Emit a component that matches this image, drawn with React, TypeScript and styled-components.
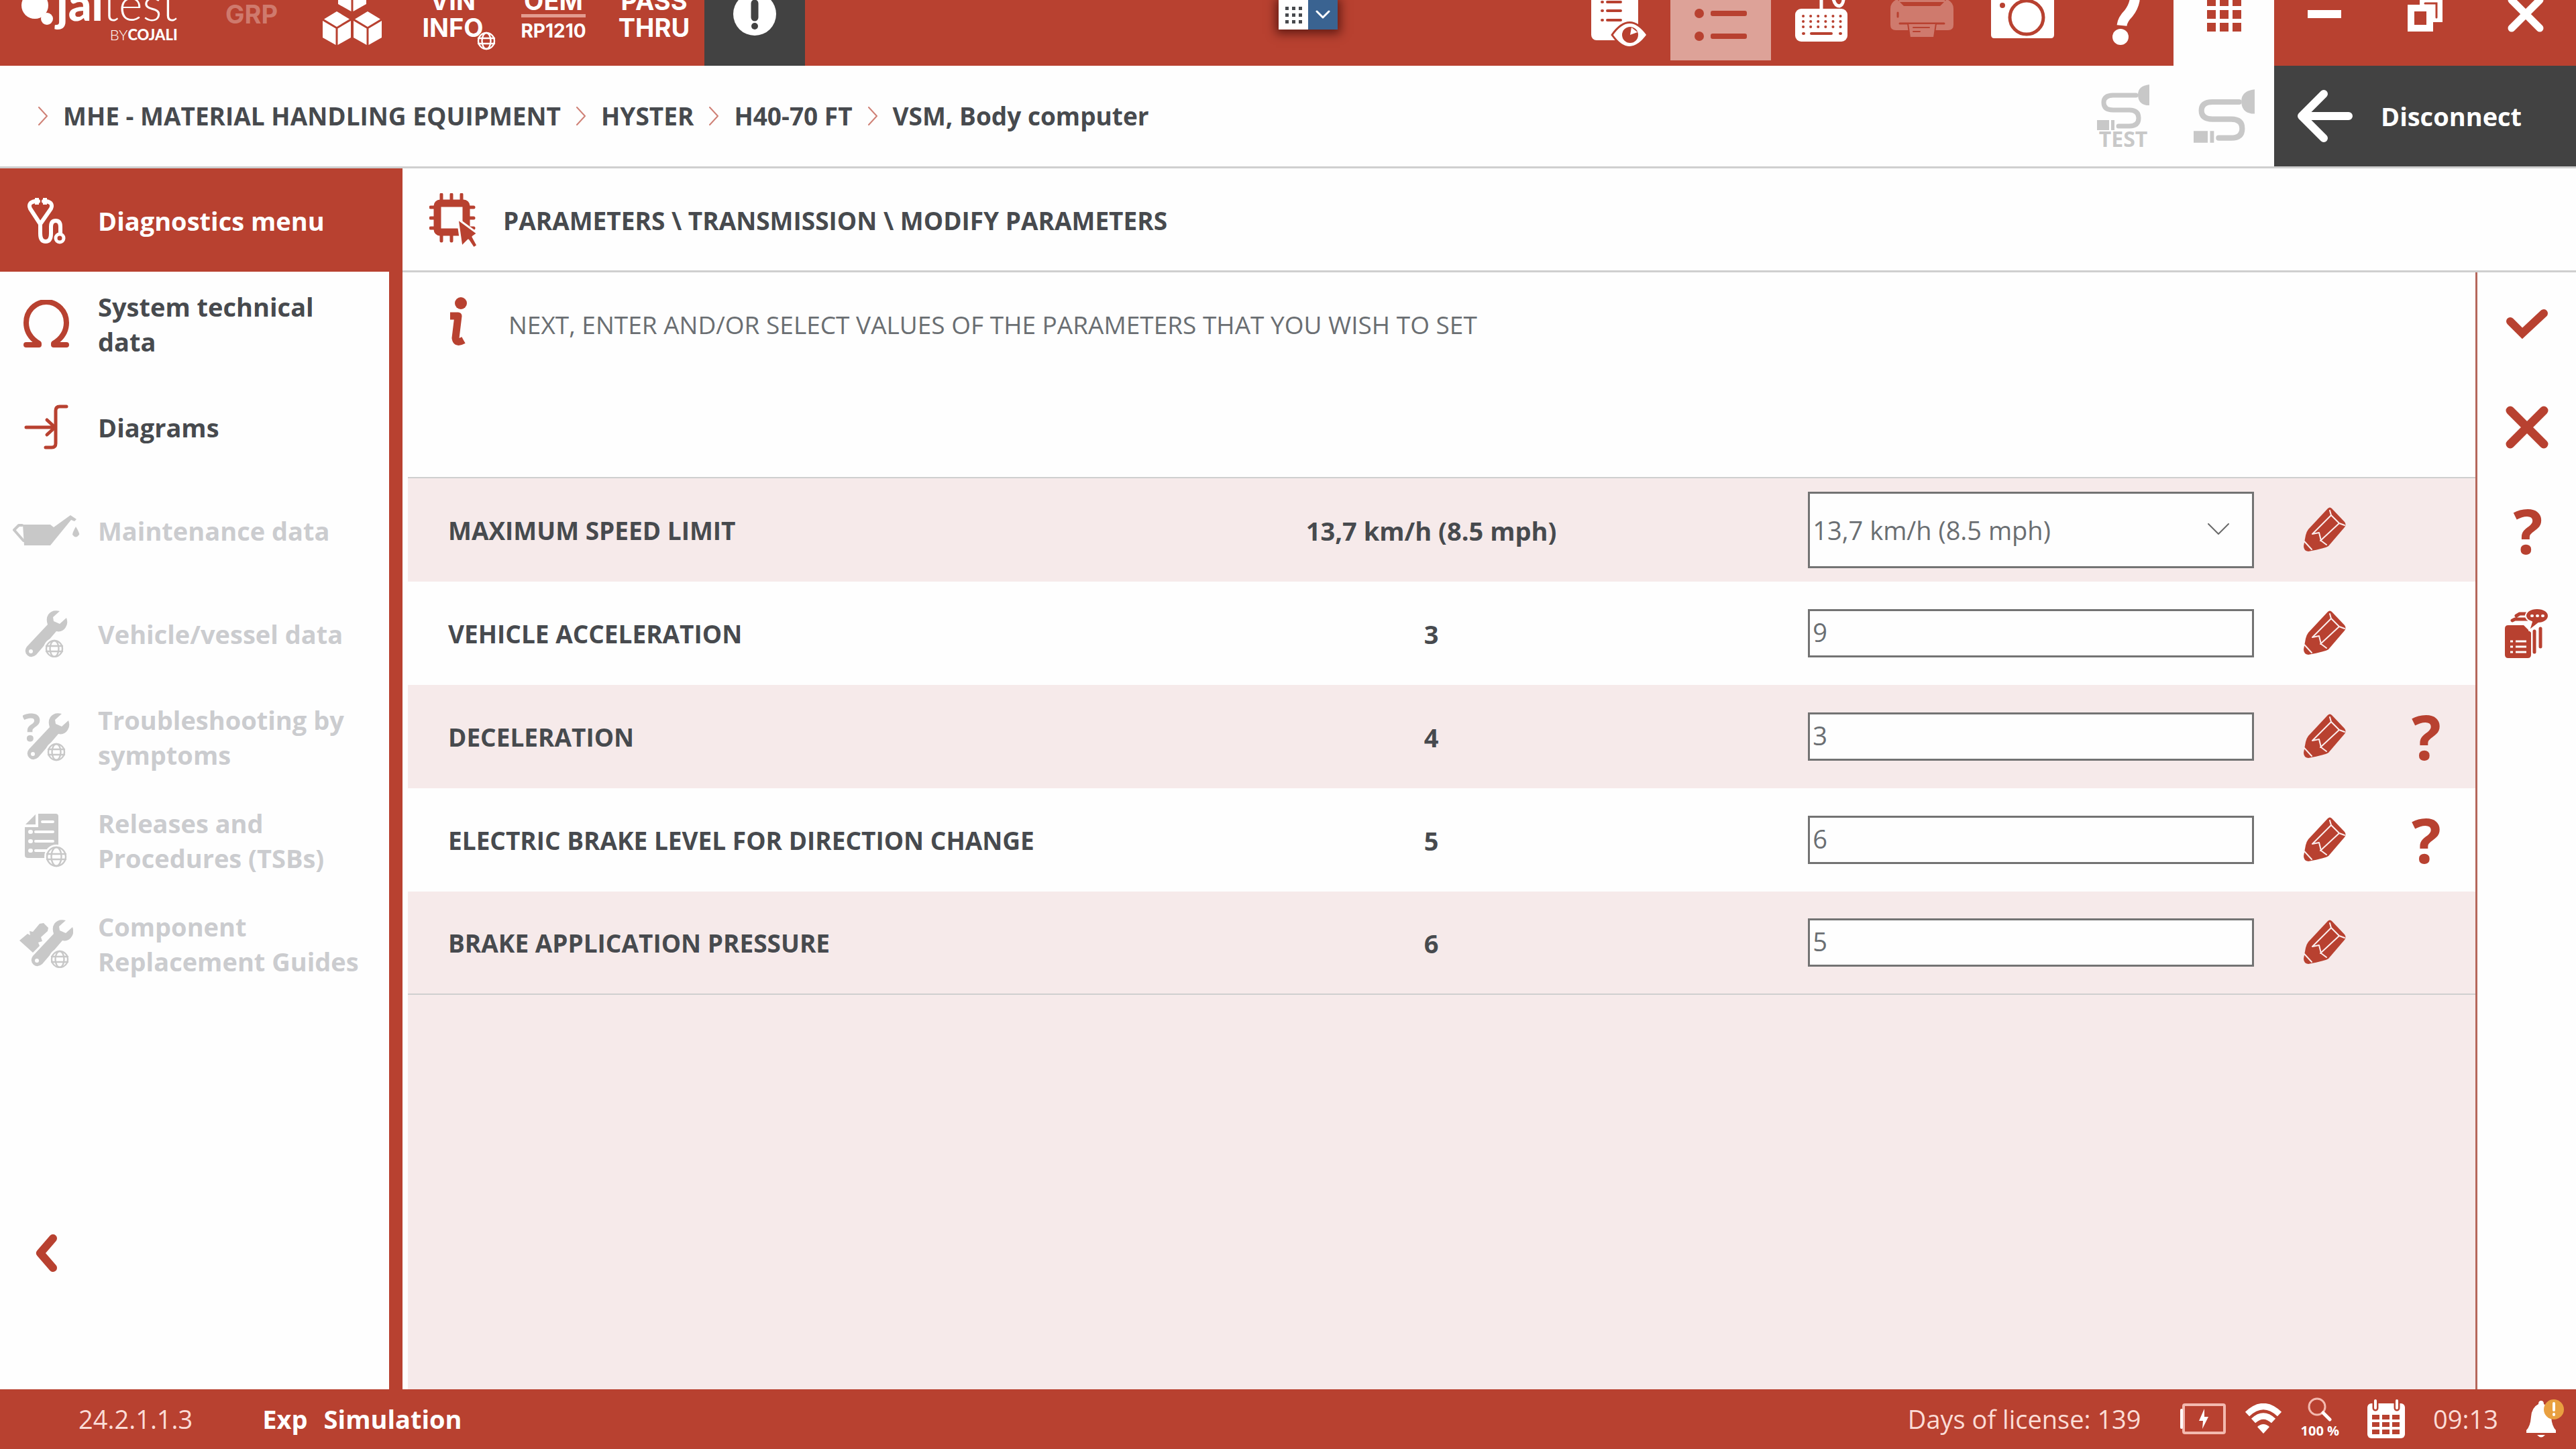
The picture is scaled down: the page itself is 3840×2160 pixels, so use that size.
import React from "react";
import styled, { createGlobalStyle, css } from "styled-components";

const color = {
  red: "#b84130",
  dark: "#424242",
  text: "#474a4e",
  soft: "#6a6e72",
  off: "#c8c8c8",
  line: "#cfcfcf",
  pink: "#f6eaea",
};

const GlobalStyle = createGlobalStyle`
  *, *::before, *::after { box-sizing: border-box; }
  body { margin: 0; background: #fefefe; }
  body, button, input, select {
    font-family: "Open Sans", "Noto Sans", sans-serif;
    font-size: 37px;
    line-height: 52px;
    color: ${color.text};
  }
  button { padding: 0; border: 0; background: none; cursor: pointer; }
  svg { display: block; flex: none; }
`;

/* ---------- layout ---------- */

const Page = styled.div`
  position: relative;
  display: flex;
  flex-direction: column;
  min-height: 100vh;
`;

const TopBar = styled.header`
  display: flex;
  align-items: flex-end;
  justify-content: space-between;
  height: 98px;
  overflow: hidden;
  background: ${color.red};
`;

const TileGroup = styled.div`
  display: flex;
`;

const Tile = styled.button<{ $tone?: "dark" | "light" | "active"; $faded?: boolean }>`
  display: flex;
  flex-direction: column;
  align-items: center;
  justify-content: center;
  width: 150px;
  height: 154px;
  color: ${(p) => (p.$faded ? "#cf7a6d" : "#fff")};
  ${(p) => p.$tone === "dark" && css`background: ${color.dark};`}
  ${(p) => p.$tone === "light" && css`background: #fefefe; color: ${color.red};`}
  ${(p) =>
    p.$tone === "active" &&
    css`
      background: #dda298;
      border-bottom: 8px solid ${color.red};
      color: ${color.red};
    `}
`;

const Caption = styled.span<{ $small?: boolean }>`
  font-family: Inter, "Open Sans", sans-serif;
  font-weight: 700;
  font-size: ${(p) => (p.$small ? 28 : 38)}px;
  line-height: ${(p) => (p.$small ? 32 : 40)}px;
`;

const CaptionRule = styled.span`
  width: 96px;
  height: 5px;
  margin-bottom: 4px;
  background: #e39c8f;
`;

const WithGlobe = styled.span`
  position: relative;
  display: flex;
  flex-direction: column;
  align-items: center;
`;

const GlobeBadge = styled.span`
  position: absolute;
  right: -18px;
  bottom: -14px;
  border-radius: 50%;
  background: ${color.red};
`;

const Brand = styled.div`
  display: flex;
  align-items: flex-end;
  width: 300px;
  height: 154px;
  padding: 0 0 34px 32px;
  color: #fff;
`;

const BrandText = styled.div`
  display: flex;
  flex-direction: column;
  align-items: flex-end;
  font-family: Lato, sans-serif;
`;

const BrandName = styled.span`
  margin-bottom: 9px;
  font-size: 68px;
  line-height: 52px;
  font-weight: 300;
  b { font-weight: 900; }
`;

const BrandBy = styled.span`
  font-size: 22px;
  line-height: 24px;
  font-weight: 300;
  b { font-weight: 900; }
`;

const Launcher = styled.div`
  position: absolute;
  top: 0;
  left: 50%;
  display: flex;
  width: 88px;
  height: 44px;
  margin-left: -14px;
  box-shadow: 0 2px 14px 4px rgba(40, 0, 0, 0.6);
`;

const LauncherButton = styled.button<{ $blue?: boolean }>`
  display: flex;
  align-items: center;
  justify-content: center;
  width: 44px;
  height: 44px;
  background: ${(p) => (p.$blue ? "#3a6391" : "#fff")};
`;

const PathBar = styled.div`
  display: flex;
  align-items: stretch;
  justify-content: space-between;
  height: 153px;
  border-bottom: 3px solid ${color.line};
`;

const Crumbs = styled.nav`
  display: flex;
  align-items: center;
  gap: 22px;
  padding-left: 56px;
  a {
    font-weight: 700;
    color: ${color.text};
    text-decoration: none;
  }
`;

const PathActions = styled.div`
  display: flex;
`;

const CableButton = styled.button`
  display: flex;
  flex-direction: column;
  align-items: center;
  justify-content: center;
  width: 150px;
  color: ${color.off};
`;

const CableText = styled.span`
  font-size: 32px;
  line-height: 26px;
  font-weight: 700;
`;

const Disconnect = styled.button`
  display: flex;
  align-items: center;
  gap: 41px;
  width: 450px;
  padding-left: 34px;
  background: ${color.dark};
  color: #fff;
  font-size: 38px;
  font-weight: 700;
`;

const Body = styled.div`
  flex: 1;
  display: flex;
  align-items: stretch;
`;

const Sidebar = styled.aside`
  display: flex;
  flex-direction: column;
  width: 600px;
  flex: none;
  border-right: 20px solid ${color.red};
`;

const MenuItem = styled.button<{ $active?: boolean }>`
  display: flex;
  align-items: center;
  width: 100%;
  height: 154px;
  padding: 2px 36px 0 0;
  text-align: left;
  font-size: 38px;
  font-weight: 700;
  background: ${(p) => (p.$active ? color.red : "transparent")};
  box-shadow: ${(p) => (p.$active ? `20px 0 0 ${color.red}` : "none")};
  color: ${(p) => (p.$active ? "#fff" : color.text)};
  &:disabled { color: #cbcccf; }
`;

const MenuIcon = styled.span<{ $tint: string }>`
  display: flex;
  justify-content: center;
  flex: none;
  width: 138px;
  margin-right: 8px;
  color: ${(p) => p.$tint};
`;

const Collapse = styled.button`
  width: 138px;
  height: 154px;
  margin-top: auto;
  margin-bottom: 126px;
  display: flex;
  align-items: center;
  justify-content: center;
  color: ${color.red};
`;

const Main = styled.main`
  flex: 1;
  min-width: 0;
  display: flex;
  flex-direction: column;
`;

const Title = styled.h1`
  display: flex;
  align-items: center;
  gap: 38px;
  height: 155px;
  margin: 0;
  padding: 4px 0 0 40px;
  border-bottom: 3px solid ${color.line};
  font-size: 37px;
  font-weight: 700;
  color: ${color.text};
`;

const Work = styled.div`
  flex: 1;
  display: flex;
`;

const Panel = styled.section`
  flex: 1;
  min-width: 0;
  display: flex;
  flex-direction: column;
  padding-left: 8px;
`;

const Info = styled.p`
  display: flex;
  align-items: flex-start;
  gap: 60px;
  height: 305px;
  margin: 0;
  padding: 36px 0 0 60px;
  color: ${color.soft};
  span { padding-top: 16px; }
`;

const Filler = styled.div`
  flex: 1;
  background: ${color.pink};
`;

const Params = styled.table`
  width: 100%;
  table-layout: fixed;
  border-spacing: 0;
  border-top: 2px solid ${color.line};
`;

const Row = styled.tr`
  height: 154px;
  &:nth-child(odd) { background: ${color.pink}; }
  &:last-child > * { border-bottom: 2px solid ${color.line}; }
`;

const NameCell = styled.th`
  padding: 2px 0 0 60px;
  text-align: left;
  font-weight: 700;
`;

const ValueCell = styled.td`
  padding: 2px 0 0;
  text-align: center;
  font-size: 38px;
  font-weight: 700;
`;

const FieldCell = styled.td`
  padding: 0 30px 0 84px;
`;

const IconCell = styled.td`
  padding: 0;
  color: ${color.red};
`;

const field = css`
  display: block;
  width: 100%;
  border: 3px solid #737373;
  border-radius: 0;
  background: #fefefe;
  color: ${color.soft};
  font-size: 38px;
  outline: none;
`;

const TextField = styled.input`
  ${field}
  height: 72px;
  padding: 0 4px 4px;
`;

const SelectBox = styled.div`
  position: relative;
  svg {
    position: absolute;
    right: 36px;
    top: 46px;
    pointer-events: none;
  }
`;

const SelectField = styled.select`
  ${field}
  height: 114px;
  padding: 0 4px;
  appearance: none;
`;

const IconButton = styled.button`
  display: flex;
  align-items: center;
  justify-content: center;
  width: 100%;
  height: 152px;
  color: ${color.red};
`;

const Question = styled.span`
  padding-left: 4px;
  font-size: 92px;
  line-height: 92px;
  font-weight: 700;
`;

const Rail = styled.div`
  width: 150px;
  flex: none;
  border-left: 3px solid #b5675b;
  button { height: 154px; }
`;

const Footer = styled.footer`
  display: flex;
  align-items: center;
  justify-content: space-between;
  height: 89px;
  padding: 0 18px 2px 117px;
  background: ${color.red};
  color: #fbdcd6;
  font-size: 38px;
`;

const FooterGroup = styled.div<{ $gap: number }>`
  display: flex;
  align-items: center;
  gap: ${(p) => p.$gap}px;
`;

const Strong = styled.span`
  font-weight: 700;
  color: #fff;
`;

const License = styled.span`
  margin-right: 16px;
`;

const Version = styled.span`
  margin-right: 80px;
`;

const Zoom = styled.button`
  display: flex;
  flex-direction: column;
  align-items: center;
  color: #fff;
  font-size: 20px;
  line-height: 28px;
  font-weight: 700;
`;

/* ---------- icons ---------- */

type Box = { w: number; h: number; children: React.ReactNode; scale?: number };
const Svg = ({ w, h, children, scale = 1 }: Box) => (
  <svg
    width={Math.round(w * scale)}
    height={Math.round(h * scale)}
    viewBox={`0 0 ${w} ${h}`}
    fill="none"
    stroke="none"
    strokeLinecap="round"
    strokeLinejoin="round"
    aria-hidden="true"
  >
    {children}
  </svg>
);

const GlobeShape = ({ x, y, r = 13, bg }: { x: number; y: number; r?: number; bg?: string }) => (
  <g stroke="currentColor" strokeWidth="2.4">
    {bg && <circle cx={x} cy={y} r={r + 3} fill={bg} stroke="none" />}
    <circle cx={x} cy={y} r={r - 1} />
    <ellipse cx={x} cy={y} rx={r / 2} ry={r - 1} />
    <path d={`M${x - r + 1} ${y - 4}H${x + r - 1}M${x - r + 1} ${y + 4}H${x + r - 1}`} />
  </g>
);

const BrandMark = () => (
  <Svg w={52} h={92}>
    <circle cx="20" cy="36" r="20" fill="currentColor" />
    <circle cx="38" cy="56" r="9" fill="currentColor" />
  </Svg>
);

const Cube = ({ x, y }: { x: number; y: number }) => (
  <path
    fill="currentColor"
    d={`M${x} ${y}l19 11.500l-19 11.500l-19 -11.500z M${x - 21} ${y + 14}l19.500 11.500v24.500l-19.500 -11z M${x + 21} ${y + 14}l-19.500 11.500v24.500l19.500 -11z`}
  />
);
const Cubes = () => (
  <Svg w={92} h={108}>
    <Cube x={46} y={0} />
    <Cube x={23} y={50} />
    <Cube x={69} y={50} />
  </Svg>
);

const AlertIcon = () => (
  <Svg w={64} h={64}>
    <circle cx="32" cy="32" r="32" fill="#fff" />
    <path d="M32 16V37" stroke={color.dark} strokeWidth="11" />
    <circle cx="32" cy="50" r="5" fill={color.dark} />
  </Svg>
);

const ReportEye = () => (
  <Svg w={86} h={100}>
    <rect width="70" height="89" rx="8" fill="#fff" />
    <path d="M24 19H44M24 32H44M24 45H44M24 59H44" stroke={color.red} strokeWidth="4" />
    <path d="M16 19h1M16 32h1M16 45h1M16 59h1" stroke={color.red} strokeWidth="4" />
    <path d="M31 81Q57 44 84 81Q57 118 31 81Z" fill="#fff" stroke={color.red} strokeWidth="3" />
    <circle cx="58" cy="81" r="12" fill={color.red} />
    <path d="M58 81L60 70L69 77Z" fill="#fff" />
  </Svg>
);

const ListIcon = () => (
  <Svg w={78} h={96}>
    {[17, 51, 85].map((y) => (
      <g key={y} fill="currentColor">
        <circle cx="7" cy={y} r="7" />
        <rect x="24" y={y - 4} width="54" height="8" rx="3" />
      </g>
    ))}
  </Svg>
);

const KeyboardIcon = () => (
  <Svg w={78} h={84}>
    <path d="M39 34V2M39 2Q52 -4 56 14Q58 30 66 30Q74 28 72 8" stroke="#fff" strokeWidth="5" />
    <rect y="34" width="78" height="49" rx="9" fill="#fff" />
    {[45, 53, 61].map((y) => (
      <path key={y} d={`M12 ${y}H68`} stroke={color.red} strokeWidth="4" strokeDasharray="0.100 11" />
    ))}
    <path d="M12 71h1M24 71H54M67 71h1" stroke={color.red} strokeWidth="4" />
  </Svg>
);

const PrinterIcon = () => (
  <Svg w={94} h={72}>
    <path d="M18 0H76L82 18H12Z" fill="currentColor" />
    <path d="M10 14L20 24H74L84 14Q94 18 94 28V52Q94 60 86 60H8Q0 60 0 52V28Q0 18 10 14Z" fill="currentColor" />
    <path d="M11 34v6M14 50H80" stroke={color.red} strokeWidth="3" />
    <path d="M26 50H68L65 71H29Z" fill="currentColor" stroke={color.red} strokeWidth="2" />
    <path d="M34 56H58M34 62H44" stroke={color.red} strokeWidth="2" />
  </Svg>
);

const CameraIcon = () => (
  <Svg w={94} h={72}>
    <path d="M5 8H28L34 0H72L78 8H89Q94 8 94 13V67Q94 72 89 72H5Q0 72 0 67V13Q0 8 5 8Z" fill="#fff" />
    <circle cx="53" cy="41" r="25" stroke={color.red} strokeWidth="5" />
    <circle cx="17" cy="23" r="4" fill={color.red} />
  </Svg>
);

const HelpIcon = () => (
  <Svg w={50} h={92}>
    <path d="M8 18Q16 8 27 8Q44 10 42 26Q40 36 33 45Q24 54 23 63" stroke="#fff" strokeWidth="15" strokeLinecap="butt" />
    <circle cx="21" cy="80" r="12" fill="#fff" />
  </Svg>
);

const GridIcon = ({ size, dot }: { size: number; dot: number }) => (
  <Svg w={size} h={size}>
    {[0, 1, 2].flatMap((r) =>
      [0, 1, 2].map((c) => (
        <rect
          key={`${r}${c}`}
          x={(c * (size - dot)) / 2}
          y={(r * (size - dot)) / 2}
          width={dot}
          height={dot}
          fill="currentColor"
        />
      ))
    )}
  </Svg>
);

const MinusIcon = () => (
  <Svg w={50} h={12}>
    <rect width="50" height="12" fill="#fff" />
  </Svg>
);

const RestoreIcon = () => (
  <Svg w={52} h={52}>
    <path d="M18 0H52V38H34V12H18Z" fill="#fff" />
    <path d="M26 10H43V31" stroke={color.red} strokeWidth="3" strokeLinejoin="miter" />
    <rect x="5" y="17" width="28" height="30" fill={color.red} stroke="#fff" strokeWidth="10" strokeLinejoin="miter" />
  </Svg>
);

const CloseIcon = () => (
  <Svg w={56} h={56}>
    <path d="M7 7L49 49M49 7L7 49" stroke="#fff" strokeWidth="11" />
  </Svg>
);

const ChevronDown = () => (
  <Svg w={22} h={14}>
    <path d="M2 2L11 11L20 2" stroke="#fff" strokeWidth="3" />
  </Svg>
);

const CrumbArrow = () => (
  <Svg w={16} h={28}>
    <path d="M2 1L14 14L2 27" stroke="#cf8176" strokeWidth="2" />
  </Svg>
);

const Cable = ({ scale }: { scale?: number }) => (
  <Svg w={78} h={68} scale={scale}>
    <path d="M58 16H24Q10 16 10 27Q10 38 24 38H48Q62 38 62 50Q62 62 48 62H32" stroke="currentColor" strokeWidth="7" />
    <path d="M78 0V31H74Q61 29 61 15Q61 2 78 0Z" fill="currentColor" />
    <path d="M0 53H18V68H0ZM21 53H26V68H21Z" fill="currentColor" />
  </Svg>
);

const ArrowLeft = () => (
  <Svg w={84} h={78}>
    <path d="M40 6L7 39L40 72M10 39H77" stroke="#fff" strokeWidth="12" />
  </Svg>
);

const Stethoscope = () => (
  <Svg w={58} h={70}>
    <path
      d="M17 6H12Q1 8 5 17L20 40L36 17Q40 8 29 6H25M20 40V54Q20 66 28 66Q36 66 36 54V44Q36 35 43 35Q50 35 50 44V54"
      stroke="currentColor"
      strokeWidth="6"
    />
    <path d="M12 6H18M24 6H30" stroke="currentColor" strokeWidth="10" strokeLinecap="butt" />
    <circle cx="49" cy="61" r="6" stroke="currentColor" strokeWidth="5" />
  </Svg>
);

const Omega = () => (
  <Svg w={68} h={72}>
    <path
      d="M4 67H23V65C10 57 4 46 4 34A30 31 0 0 1 64 34C64 46 58 57 45 65V67H64"
      stroke="currentColor"
      strokeWidth="8"
    />
  </Svg>
);

const DiagramIcon = () => (
  <Svg w={66} h={68}>
    <path d="M63 3H53Q47 3 47 9V58Q47 64 41 64H32" stroke="currentColor" strokeWidth="5" />
    <path d="M3 34H46M34 23L46 34L34 45" stroke="currentColor" strokeWidth="5" />
  </Svg>
);

const OilCan = () => (
  <Svg w={100} h={46}>
    <path d="M15 14H56L61 18L86 0L95 6L92 9L87 7L56 45H17Z" fill="currentColor" />
    <path d="M14 15L9 15L2 22L16 38" stroke="currentColor" strokeWidth="4" />
    <path d="M94 17Q100 27 99 29Q94 36 89 29Q89 26 94 17Z" fill="currentColor" />
  </Svg>
);

/* Spanner with open jaws at the top right and a pierced handle. */
const Spanner = ({ x }: { x: number }) => (
  <g transform={`translate(${x} 0)`}>
    <path
      d="M52 1Q41 -2 35 6Q31 12 34 21L3 54Q-2 61 4 67Q10 72 17 66L47 31Q56 33 61 25Q65 19 62 11L52 20L43 16L42 10Z"
      fill="currentColor"
    />
    <circle cx="9" cy="61" r="3" fill="#fefefe" />
  </g>
);

const VehicleIcon = () => (
  <Svg w={64} h={70}>
    <Spanner x={0} />
    <GlobeShape x={44} y={57} bg="#fefefe" />
  </Svg>
);

const TroubleIcon = () => (
  <Svg w={70} h={72}>
    <text x="-1" y="42" fontFamily="Open Sans" fontWeight="700" fontSize="58" fill="currentColor">?</text>
    <Spanner x={6} />
    <GlobeShape x={50} y={58} bg="#fefefe" />
  </Svg>
);

const ReleaseIcon = () => (
  <Svg w={64} h={80}>
    <path d="M20 0H46Q50 0 50 4V66H5Q0 66 0 62V20H20Z" fill="currentColor" />
    <path d="M1 16L16 1V16Z" fill="currentColor" />
    <path d="M26 12H42M16 27H42M16 41H42M16 55H36" stroke="#fefefe" strokeWidth="4" />
    <path d="M8 27h1M8 41h1M8 55h1" stroke="#fefefe" strokeWidth="6" />
    <GlobeShape x={47} y={64} r={15} bg="#fefefe" />
  </Svg>
);

const ComponentIcon = () => (
  <Svg w={80} h={72}>
    <path d="M30 6L36 5L43 12L42 17L32 26L34 32L28 34L30 39L20 49L0 31L12 21L16 23L15 17L20 18Z" fill="currentColor" />
    <Spanner x={17} />
    <GlobeShape x={60} y={59} bg="#fefefe" />
  </Svg>
);

const ChevronLeft = () => (
  <Svg w={34} h={58}>
    <path d="M27 7L8 29L27 51" stroke="currentColor" strokeWidth="12" />
  </Svg>
);

const ChipIcon = () => (
  <Svg w={72} h={82}>
    <rect x="12" y="15" width="43" height="43" rx="4" stroke={color.red} strokeWidth="11" />
    <path
      d="M18 2V10M33 2V10M48 2V10M18 63V71M33 63V71M2 21H8M2 37H8M2 52H8M60 21H66M60 37H66M60 52H66"
      stroke={color.red}
      strokeWidth="5"
    />
    <path d="M42 38L72 60L65 65L72 78L66 82L58 70L48 80Z" fill={color.red} stroke="#fefefe" strokeWidth="3" />
  </Svg>
);

const InfoIcon = () => (
  <Svg w={30} h={76}>
    <circle cx="19" cy="10" r="9" fill={color.red} />
    <path d="M3 29H15L11 62Q12 71 23 65" stroke={color.red} strokeWidth="11" strokeLinecap="butt" />
  </Svg>
);

const Pencil = () => (
  <Svg w={64} h={68}>
    <path d="M37 2Q40 -1 43 2L62 22Q65 26 62 30L38 58Q34 61 8 66Q1 65 1 58L4 42Q5 37 8 33Z" fill="currentColor" />
    <path
      d="M14 40L42 12M26 50L54 24M14 40L24 38L27 50L35 56M40 5L42 12L54 24L62 27M2 51L13 63"
      stroke="#fbeeee"
      strokeWidth="2"
    />
  </Svg>
);

const SelectArrow = () => (
  <Svg w={34} h={20}>
    <path d="M2 2L17 17L32 2" stroke="#6a6a6a" strokeWidth="2" />
  </Svg>
);

const CheckIcon = () => (
  <Svg w={64} h={48}>
    <path d="M7 20L25 38L57 8" stroke="currentColor" strokeWidth="12" strokeLinejoin="miter" />
  </Svg>
);

const CrossIcon = () => (
  <Svg w={64} h={66}>
    <path d="M7 8L57 58M57 8L7 58" stroke="currentColor" strokeWidth="13" />
  </Svg>
);

const NotesIcon = () => (
  <Svg w={66} h={76}>
    <path d="M17 11L22 8H32M11 18L15 16H34M44 34V65M53 30V57" stroke="currentColor" strokeWidth="5" />
    <path d="M5 25H28L39 36V69Q39 74 34 74H5Q0 74 0 69V30Q0 25 5 25Z" fill="currentColor" />
    <path d="M16 49H32M16 57H32M16 65H32M8 49h4M8 57h4M8 65h4" stroke="#fefefe" strokeWidth="3" strokeLinecap="butt" />
    <path d="M48 0C58 0 65 5 65 11C65 17 58 22 50 22L36 33L40 20C34 18 31 15 31 11C31 5 38 0 48 0Z" fill="currentColor" stroke="#fefefe" strokeWidth="2" />
    <path d="M40 11h1M48 11h1M56 11h1" stroke="#fefefe" strokeWidth="4" />
  </Svg>
);

const Battery = () => (
  <Svg w={68} h={46}>
    <rect x="5" y="2" width="61" height="42" rx="2" stroke="#f3b9af" strokeWidth="4" />
    <path d="M2 10V36" stroke="#fff" strokeWidth="4" />
    <path d="M36 8L28 26H34L33 38L42 20H36Z" fill="#fff" />
  </Svg>
);

const Wifi = () => (
  <Svg w={56} h={46}>
    <path d="M4 16Q28 -7 52 16M13 26Q28 12 43 26" stroke="#fff" strokeWidth="9" strokeLinecap="butt" />
    <path d="M28 45L19 35Q28 27 37 35Z" fill="#fff" />
  </Svg>
);

const Magnifier = () => (
  <Svg w={36} h={36}>
    <circle cx="14" cy="14" r="12" stroke="#f3b9af" strokeWidth="3" />
    <path d="M23 23L33 33" stroke="#fff" strokeWidth="5" />
  </Svg>
);

const CalendarIcon = () => (
  <Svg w={56} h={60}>
    <rect y="7" width="56" height="52" rx="6" fill="#fff" />
    <path d="M12 2V14M44 2V14" stroke={color.red} strokeWidth="9" />
    <path d="M12 3V14M44 3V14" stroke="#fff" strokeWidth="4" />
    <path
      d="M7 24h11v7h-11zM22 24h11v7h-11zM37 24h11v7h-11zM7 35h11v7h-11zM22 35h11v7h-11zM37 35h11v7h-11zM7 46h11v7h-11zM22 46h11v7h-11zM37 46h11v7h-11z"
      fill={color.red}
    />
  </Svg>
);

const BellIcon = () => (
  <Svg w={56} h={58}>
    <path d="M22 2Q26 2 26 7Q36 12 37 26Q38 40 44 46V50H0V46Q6 40 7 26Q8 12 18 7Q18 2 22 2Z" fill="#fff" />
    <path d="M16 53Q22 60 28 53Z" fill="#fff" />
    <circle cx="41" cy="15" r="15" fill="#e9a040" />
    <path d="M41 6V16M41 22V23" stroke="#fff" strokeWidth="4" />
  </Svg>
);

/* ---------- data ---------- */

const menu = [
  { text: "Diagnostics menu", icon: <Stethoscope />, state: "active" },
  { text: "System technical data", icon: <Omega />, state: "on" },
  { text: "Diagrams", icon: <DiagramIcon />, state: "on" },
  { text: "Maintenance data", icon: <OilCan />, state: "off" },
  { text: "Vehicle/vessel data", icon: <VehicleIcon />, state: "off" },
  { text: "Troubleshooting by symptoms", icon: <TroubleIcon />, state: "off" },
  { text: "Releases and Procedures (TSBs)", icon: <ReleaseIcon />, state: "off" },
  { text: "Component Replacement Guides", icon: <ComponentIcon />, state: "off" },
];

const tint: Record<string, string> = { active: "#fff", on: color.red, off: color.off };

const crumbs = ["MHE - MATERIAL HANDLING EQUIPMENT", "HYSTER", "H40-70 FT", "VSM, Body computer"];

const speed = "13,7 km/h (8.5 mph)";
const params = [
  { id: "speed", name: "MAXIMUM SPEED LIMIT", now: speed, next: speed, options: [speed] },
  { id: "accel", name: "VEHICLE ACCELERATION", now: "3", next: "9" },
  { id: "decel", name: "DECELERATION", now: "4", next: "3", help: true },
  { id: "brake", name: "ELECTRIC BRAKE LEVEL FOR DIRECTION CHANGE", now: "5", next: "6", help: true },
  { id: "pressure", name: "BRAKE APPLICATION PRESSURE", now: "6", next: "5" },
];

/* ---------- page ---------- */

export default function App() {
  return (
    <Page>
      <GlobalStyle />
      <TopBar>
        <TileGroup>
          <Brand>
            <BrandMark />
            <BrandText>
              <BrandName><b>jal</b>test</BrandName>
              <BrandBy>BY<b>COJALI</b></BrandBy>
            </BrandText>
          </Brand>
          <Tile $faded><Caption>GRP</Caption></Tile>
          <Tile aria-label="Modules"><Cubes /></Tile>
          <Tile>
            <WithGlobe>
              <Caption>VIN</Caption>
              <Caption>INFO</Caption>
              <GlobeBadge><Svg w={28} h={28}><GlobeShape x={14} y={14} /></Svg></GlobeBadge>
            </WithGlobe>
          </Tile>
          <Tile>
            <Caption>OEM</Caption>
            <CaptionRule />
            <Caption $small>RP1210</Caption>
          </Tile>
          <Tile>
            <Caption>PASS</Caption>
            <Caption>THRU</Caption>
          </Tile>
          <Tile $tone="dark" aria-label="Alerts"><AlertIcon /></Tile>
        </TileGroup>
        <TileGroup>
          <Tile aria-label="Report"><ReportEye /></Tile>
          <Tile $tone="active" aria-label="List"><ListIcon /></Tile>
          <Tile aria-label="Keyboard"><KeyboardIcon /></Tile>
          <Tile $faded aria-label="Print"><PrinterIcon /></Tile>
          <Tile aria-label="Camera"><CameraIcon /></Tile>
          <Tile aria-label="Help"><HelpIcon /></Tile>
          <Tile $tone="light" aria-label="Apps"><GridIcon size={51} dot={13} /></Tile>
          <Tile aria-label="Minimise"><MinusIcon /></Tile>
          <Tile aria-label="Restore"><RestoreIcon /></Tile>
          <Tile aria-label="Close"><CloseIcon /></Tile>
        </TileGroup>
      </TopBar>

      <Launcher>
        <LauncherButton aria-label="Launcher"><GridIcon size={25} dot={5} /></LauncherButton>
        <LauncherButton $blue aria-label="Launcher menu"><ChevronDown /></LauncherButton>
      </Launcher>

      <PathBar>
        <Crumbs>
          {crumbs.map((c) => (
            <React.Fragment key={c}>
              <CrumbArrow />
              <a href="#">{c}</a>
            </React.Fragment>
          ))}
        </Crumbs>
        <PathActions>
          <CableButton><Cable /><CableText>TEST</CableText></CableButton>
          <CableButton aria-label="Cable"><Cable scale={1.17} /></CableButton>
          <Disconnect><ArrowLeft />Disconnect</Disconnect>
        </PathActions>
      </PathBar>

      <Body>
        <Sidebar>
          {menu.map((m) => (
            <MenuItem key={m.text} $active={m.state === "active"} disabled={m.state === "off"}>
              <MenuIcon $tint={tint[m.state]}>{m.icon}</MenuIcon>
              {m.text}
            </MenuItem>
          ))}
          <Collapse aria-label="Collapse menu"><ChevronLeft /></Collapse>
        </Sidebar>

        <Main>
          <Title><ChipIcon />PARAMETERS \ TRANSMISSION \ MODIFY PARAMETERS</Title>
          <Work>
            <Panel>
              <Info>
                <InfoIcon />
                <span>NEXT, ENTER AND/OR SELECT VALUES OF THE PARAMETERS THAT YOU WISH TO SET</span>
              </Info>
              <Params>
                <colgroup>
                  <col style={{ width: "34%" }} />
                  <col style={{ width: "31%" }} />
                  <col />
                  <col style={{ width: "150px" }} />
                  <col style={{ width: "150px" }} />
                </colgroup>
                <tbody>
                  {params.map((p) => (
                    <Row key={p.id}>
                      <NameCell scope="row"><label htmlFor={p.id}>{p.name}</label></NameCell>
                      <ValueCell>{p.now}</ValueCell>
                      <FieldCell>
                        {p.options ? (
                          <SelectBox>
                            <SelectField id={p.id} defaultValue={p.next}>
                              {p.options.map((o) => <option key={o}>{o}</option>)}
                            </SelectField>
                            <SelectArrow />
                          </SelectBox>
                        ) : (
                          <TextField id={p.id} defaultValue={p.next} />
                        )}
                      </FieldCell>
                      <IconCell><IconButton aria-label="Edit"><Pencil /></IconButton></IconCell>
                      <IconCell>{p.help && <IconButton><Question>?</Question></IconButton>}</IconCell>
                    </Row>
                  ))}
                </tbody>
              </Params>
              <Filler />
            </Panel>
            <Rail>
              <IconButton aria-label="Accept"><CheckIcon /></IconButton>
              <IconButton aria-label="Cancel"><CrossIcon /></IconButton>
              <IconButton><Question>?</Question></IconButton>
              <IconButton aria-label="Notes"><NotesIcon /></IconButton>
            </Rail>
          </Work>
        </Main>
      </Body>

      <Footer>
        <FooterGroup $gap={24}>
          <Version>24.2.1.1.3</Version>
          <Strong>Exp</Strong>
          <Strong>Simulation</Strong>
        </FooterGroup>
        <FooterGroup $gap={42}>
          <License>Days of license: 139</License>
          <FooterGroup $gap={28}>
            <Battery />
            <Wifi />
            <Zoom><Magnifier />100 %</Zoom>
          </FooterGroup>
          <CalendarIcon />
          <span>09:13</span>
          <BellIcon />
        </FooterGroup>
      </Footer>
    </Page>
  );
}
